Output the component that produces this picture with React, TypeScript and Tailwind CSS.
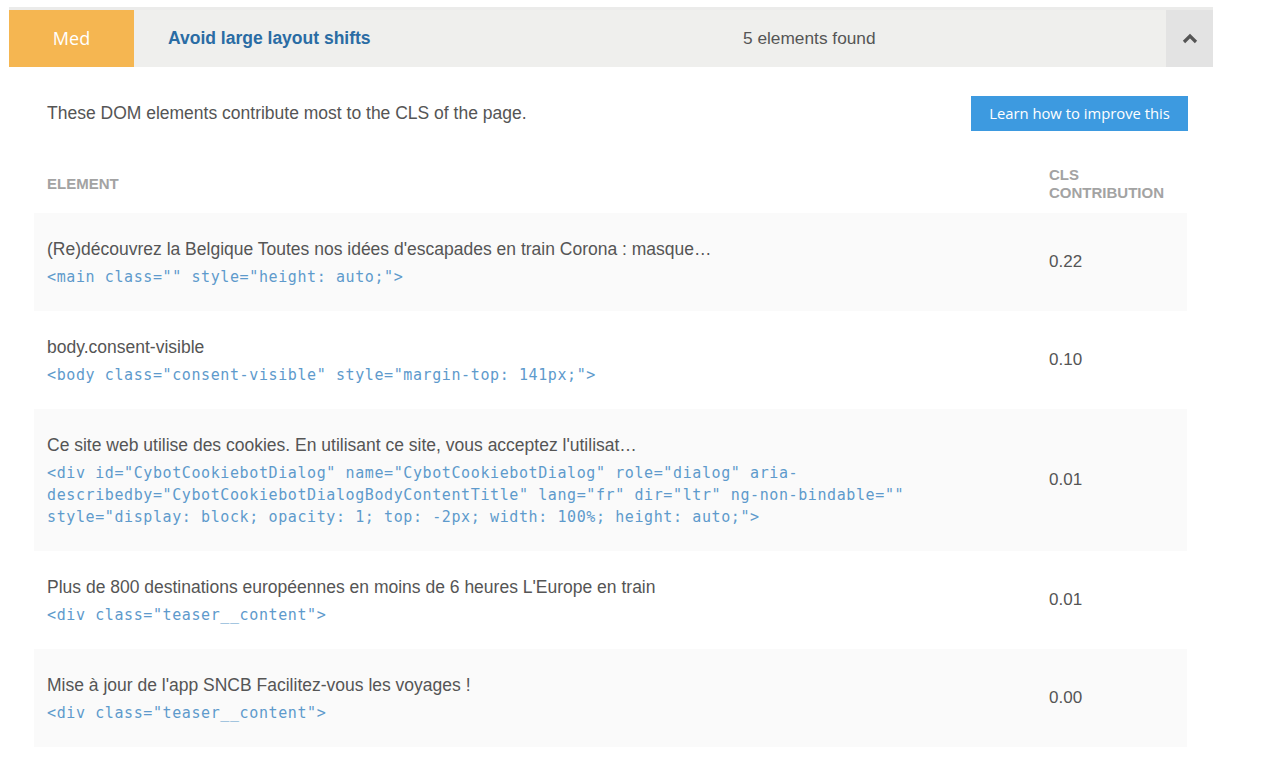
const ROWS = [
  {
    text: "(Re)découvrez la Belgique Toutes nos idées d'escapades en train Corona : masque…",
    code: '<main class="" style="height: auto;">',
    value: '0.22',
    shade: true,
  },
  {
    text: 'body.consent-visible',
    code: '<body class="consent-visible" style="margin-top: 141px;">',
    value: '0.10',
    shade: false,
  },
  {
    text: "Ce site web utilise des cookies. En utilisant ce site, vous acceptez l'utilisat…",
    code: '<div id="CybotCookiebotDialog" name="CybotCookiebotDialog" role="dialog" aria-describedby="CybotCookiebotDialogBodyContentTitle" lang="fr" dir="ltr" ng-non-bindable="" style="display: block; opacity: 1; top: -2px; width: 100%; height: auto;">',
    value: '0.01',
    shade: true,
  },
  {
    text: "Plus de 800 destinations européennes en moins de 6 heures L'Europe en train",
    code: '<div class="teaser__content">',
    value: '0.01',
    shade: false,
  },
  {
    text: "Mise à jour de l'app SNCB Facilitez-vous les voyages !",
    code: '<div class="teaser__content">',
    value: '0.00',
    shade: true,
  },
]

export default function App() {
  return (
    <div className="min-h-screen bg-white pt-[7px] pl-[9px] font-['Liberation_Sans',Arial,sans-serif]">
      <div className="w-[1204px]">
        {/* audit header */}
        <div className="flex h-[60px] border-t-[3px] border-[#ebebea] bg-[#efefed]">
          <div className="flex w-[125px] items-center justify-center bg-[#f5b651] font-['Open_Sans',sans-serif] text-[18px] text-white">
            Med
          </div>
          <div className="flex w-[609px] items-center pl-[34px] text-[17.5px] font-bold text-[#2a6ca4]">
            Avoid large layout shifts
          </div>
          <div className="flex flex-1 items-center text-[17.3px] text-[#555]">5 elements found</div>
          <button className="flex w-[47px] items-center justify-center bg-[#e3e3e3]">
            <svg width="16" height="11" viewBox="0 0 16 11">
              <polyline points="2,9 8,3 14,9" fill="none" stroke="#555" strokeWidth="3.2" />
            </svg>
          </button>
        </div>

        <div className="pl-[25px] pr-[26px]">
          <div className="flex items-center justify-between pt-[29px]">
            <p className="pl-[13px] text-[17.5px] text-[#555]">
              These DOM elements contribute most to the CLS of the page.
            </p>
            <a className="mr-[-1px] flex h-[35px] w-[217px] items-center justify-center bg-[#3d9ae0] font-['Open_Sans',sans-serif] text-[14.8px] text-white">
              Learn how to improve this
            </a>
          </div>

          <table className="w-full border-collapse">
            <thead>
              <tr className="text-left text-[15px] font-bold uppercase leading-[18px] text-[#a3a3a3]">
                <th className="pt-[35px] pb-[11px] pl-[13px] align-middle">Element</th>
                <th className="w-[151px] pt-[35px] pb-[11px] pl-[13px] align-middle">
                  CLS
                  <br />
                  Contribution
                </th>
              </tr>
            </thead>
            <tbody>
              {ROWS.map((r, i) => (
                <tr key={i} className={r.shade ? 'bg-[#fafafa]' : 'bg-white'}>
                  <td className="pt-[24px] pb-[23px] pl-[13px] pr-[6px] align-top">
                    <div className="text-[17.5px] leading-[24px] text-[#555]">{r.text}</div>
                    <div className="mt-[5px] font-['DejaVu_Sans_Mono',monospace] text-[15px] leading-[22px] tracking-[0.6px] text-[#5e9acc]">
                      {r.code}
                    </div>
                  </td>
                  <td className="pl-[13px] align-middle text-[17px] text-[#555]">{r.value}</td>
                </tr>
              ))}
            </tbody>
          </table>
        </div>
      </div>
    </div>
  )
}
